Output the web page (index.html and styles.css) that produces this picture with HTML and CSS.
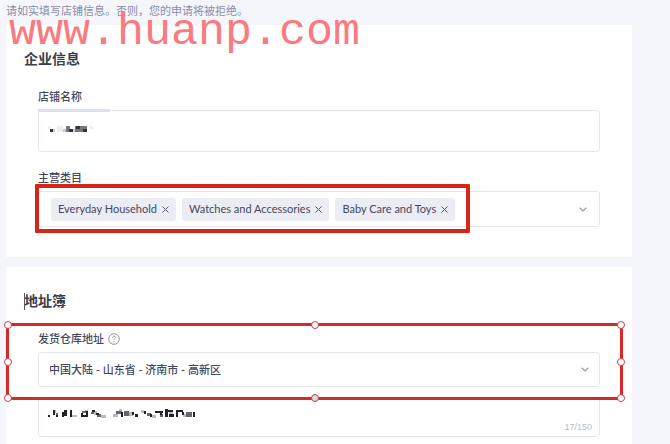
FILE: index.html
```
<!DOCTYPE html>
<html lang="zh-CN">
<head>
    <meta charset="UTF-8">
    <meta name="viewport" content="width=device-width, initial-scale=1.0">
    <title>店铺信息</title>
    <link rel="stylesheet" href="styles.css">
</head>
<body>
    <div class="watermark">www.huanp.com</div>
    <main class="page">
        <p class="notice">请如实填写店铺信息。否则，您的申请将被拒绝。</p>

        <section class="card">
            <h2>企业信息</h2>
            <div class="field">
                <label for="shop">店铺名称</label>
                <div class="control shop">
                    <input type="text" id="shop" name="shop">
                    <svg class="mask" width="48" height="10" viewBox="0 0 48 10" shape-rendering="crispEdges">
                        <path fill="#eeeef1" d="M0 1h3v3H0zM9 1h6v6H9zM42 1h3v3h-3z"/>
                        <path fill="#c9c9ce" d="M15 4h4v3h-4zM5 4h2v3H5zM25 4h3v3h-3z"/>
                        <path fill="#77777d" d="M18 1h4v6h-4zM27 1h12v6H27z"/>
                        <path fill="#34343a" d="M2 4h3v3H2zM21 4h4v3h-4zM28 1h4v3h-4zM35 4h4v3h-4z"/>
                    </svg>
                </div>
            </div>
            <div class="field category">
                <label for="category">主营类目</label>
                <div class="control tag-box">
                    <div class="tags">
                        <span class="tag">Everyday Household
                            <button type="button" aria-label="Everyday Household"><svg width="7" height="7" viewBox="0 0 7 7"><path d="M.5.5l6 6m0-6l-6 6"/></svg></button>
                        </span>
                        <span class="tag">Watches and Accessories
                            <button type="button" aria-label="Watches and Accessories"><svg width="7" height="7" viewBox="0 0 7 7"><path d="M.5.5l6 6m0-6l-6 6"/></svg></button>
                        </span>
                        <span class="tag">Baby Care and Toys
                            <button type="button" aria-label="Baby Care and Toys"><svg width="7" height="7" viewBox="0 0 7 7"><path d="M.5.5l6 6m0-6l-6 6"/></svg></button>
                        </span>
                        <div class="mark"></div>
                    </div>
                    <button type="button" id="category" class="toggle">
                        <svg class="chevron" width="8" height="5" viewBox="0 0 8 5"><path d="M.7.8L4 4 7.3.8"/></svg>
                    </button>
                </div>
            </div>
        </section>

        <section class="card address">
            <h2 class="caret">地址簿</h2>
            <div class="field warehouse">
                <label for="warehouse">发货仓库地址
                    <svg class="help" width="12" height="12" viewBox="0 0 12 12"><circle cx="6" cy="6" r="5.3"/><path d="M4.5 4.8c0-2 3-2 3-.2 0 1.1-1.5 1.1-1.5 2.3M6 8v1"/></svg>
                </label>
                <div class="control">
                    <select id="warehouse" name="warehouse">
                        <option>中国大陆 - 山东省 - 济南市 - 高新区</option>
                    </select>
                    <svg class="chevron over" width="8" height="5" viewBox="0 0 8 5"><path d="M.7.8L4 4 7.3.8"/></svg>
                </div>
                <div class="selection">
                    <i class="dot top left"></i><i class="dot top center"></i><i class="dot top right"></i>
                    <i class="dot middle left"></i><i class="dot middle right"></i>
                    <i class="dot bottom left"></i><i class="dot bottom center gray"></i><i class="dot bottom right"></i>
                </div>
            </div>
            <div class="control detail">
                <textarea name="detail" aria-label="详细地址" maxlength="150"></textarea>
                <svg class="mask" width="148" height="10" viewBox="0 0 148 10" shape-rendering="crispEdges">
                    <path fill="#b9b9be" d="M6 1h2v3H6zM24 6h5v2h-5zM37 1h3v3h-3zM46 2h3v4h-3zM53 6h5v3h-5zM65 5h5v3h-5zM71 0h3v4h-3zM81 3h4v4h-4zM93 1h3v3h-3zM104 6h4v3h-4zM121 2h4v5h-4zM135 5h5v3h-5z"/>
                    <path fill="#66666d" d="M8 4h2v3H8zM34 2h4v2h-4zM43 3h3v2h-3zM49 5h4v3h-4zM68 2h6v3h-6zM76 2h5v5h-5zM99 4h4v3h-4zM112 5h3v3h-3zM138 3h6v5h-6z"/>
                    <path fill="#222228" d="M0 6h2v2H0zM5 1h2v5H5zM8 6h2v2H8zM14 3h2v5h-2zM16 1h3v6h-3zM22 1h2v7h-2zM33 4h2v4h-2zM35 6h5v2h-5zM38 2h2v5h-2zM44 1h3v2h-3zM48 4h3v2h-3zM73 3h2v5h-2zM84 3h2v3h-2zM87 5h3v3h-3zM96 2h2v3h-2zM102 5h2v3h-2zM107 2h8v2h-8zM112 4h2v2h-2zM117 0h3v8h-3zM120 1h5v2h-5zM121 5h5v3h-5zM128 1h2v7h-2zM130 1h5v2h-5zM134 3h2v3h-2zM145 3h2v5h-2z"/>
                </svg>
                <span class="count">17/150</span>
            </div>
        </section>
    </main>
</body>
</html>
```

FILE: styles.css
```
* {
    box-sizing: border-box;
}

body {
    margin: 0;
    min-height: 100vh;
    background: #f5f5fc;
    color: #45485c;
    font-family: "Lato", "Noto Sans CJK SC", sans-serif;
    font-size: 11px;
    line-height: 16px;
    overflow: hidden;
}

.page {
    padding: 3px 38px 0 6px;
}

.watermark {
    position: absolute;
    top: 6px;
    left: 9px;
    z-index: 5;
    color: #f97b7f;
    font-family: "Liberation Mono", monospace;
    font-size: 45px;
    line-height: 54px;
    pointer-events: none;
}

.notice {
    margin: 0 0 6px;
    color: #8b8da6;
}

.card {
    margin-bottom: 10px;
    padding: 24px 32px 30px;
    background: #fff;
}

h2 {
    margin: 0 0 20px -14px;
    color: #3a3d4c;
    font-size: 14px;
    font-weight: 700;
    line-height: 20px;
}

label {
    display: flex;
    align-items: center;
    gap: 4px;
    margin-bottom: 5px;
    font-weight: 500;
}

.control {
    position: relative;
}

input,
select,
textarea,
.tag-box {
    display: block;
    width: 100%;
    border: 1px solid #e6e6f0;
    border-radius: 3px;
    background: #fff;
    color: inherit;
    font: inherit;
    outline: none;
}

input {
    height: 42px;
    padding: 0 10px;
}

.shop::before {
    content: "";
    position: absolute;
    top: -1px;
    left: 0;
    width: 72px;
    height: 3px;
    background: #dde0f0;
}

.mask {
    position: absolute;
    top: 15px;
    left: 10px;
}

.category {
    margin-top: 18px;
}

.tag-box {
    display: flex;
    align-items: center;
    justify-content: space-between;
    height: 36px;
    padding: 0 12px;
}

.tags {
    position: relative;
    display: flex;
    gap: 6px;
}

.tag {
    display: flex;
    align-items: center;
    gap: 5px;
    height: 23px;
    padding: 0 7px;
    border-radius: 3px;
    background: #ebecf4;
    white-space: nowrap;
}

button {
    display: flex;
    padding: 0;
    border: 0;
    background: none;
    cursor: pointer;
}

svg {
    fill: none;
}

.tag svg {
    stroke: #55576a;
}

.chevron {
    stroke: #9899a6;
    stroke-width: 1.2;
}

.mark {
    position: absolute;
    inset: -14px -15px -12px -16px;
    border: 4px solid #d52618;
    border-radius: 1px;
    pointer-events: none;
}

.address {
    padding-bottom: 20px;
}

.caret {
    position: relative;
}

.caret::before {
    content: "";
    position: absolute;
    top: 2px;
    left: 0;
    width: 1px;
    height: 17px;
    background: #55576a;
}

.warehouse {
    position: relative;
}

.help {
    stroke: #85879a;
    stroke-width: 0.9;
}

select {
    height: 35px;
    padding: 0 10px;
    appearance: none;
    font-weight: 500;
}

.over {
    position: absolute;
    top: 15px;
    right: 11px;
    pointer-events: none;
}

.selection {
    position: absolute;
    inset: -8px -23px -13px -32px;
    z-index: 2;
    border: 3px solid #d52a26;
    pointer-events: none;
}

.dot {
    position: absolute;
    width: 8px;
    height: 8px;
    border: 1px solid #cf3f45;
    border-radius: 50%;
    background: #fff;
}

.top {
    top: -5px;
}

.middle {
    top: calc(50% - 4px);
}

.bottom {
    bottom: -5px;
}

.left {
    left: -5px;
}

.center {
    left: calc(50% - 4px);
}

.right {
    right: -5px;
}

.gray {
    background: #dcdcd6;
}

.detail {
    margin-top: 10px;
}

textarea {
    height: 40px;
    padding: 8px 10px;
    resize: none;
}

.detail .mask {
    top: 12px;
}

.count {
    position: absolute;
    right: 8px;
    bottom: 2px;
    color: #babbc9;
    font-family: "Liberation Sans", sans-serif;
    font-size: 9px;
}
```
